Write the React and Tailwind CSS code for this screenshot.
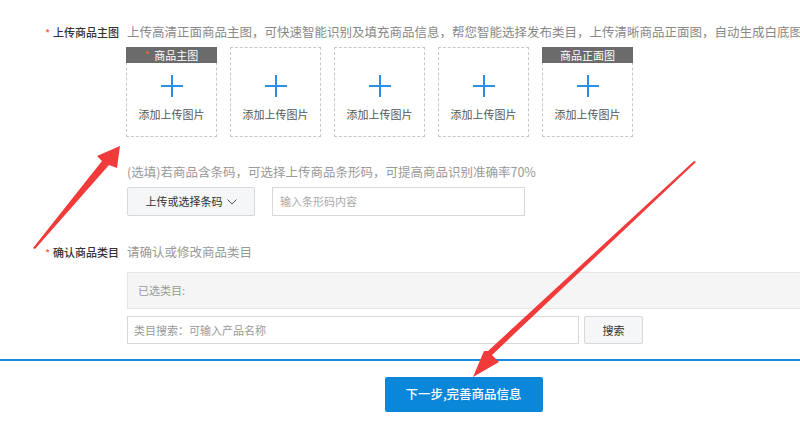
import React from "react";

const font = { fontFamily: '"Noto Sans CJK SC", "Noto Sans", sans-serif' };

function FieldLabel({ text }) {
  return (
    <div className="w-[119px] shrink-0 flex justify-end items-center h-4 text-[11px] text-[#333] font-medium">
      <span className="text-[#ff5a1f] mr-[3px] text-[10px] leading-none mt-[2px]">*</span>
      {text}
    </div>
  );
}

function PlusIcon() {
  return (
    <svg width="22" height="22" viewBox="0 0 22 22">
      <path d="M11 0v22M0 11h22" stroke="#2c8ee6" strokeWidth="2" />
    </svg>
  );
}

function UploadBox({ title, required }) {
  return (
    <div className="w-[91px] h-[90px] border border-dashed border-[#c8c8c8] flex flex-col">
      {title ? (
        <div className="h-[16px] -mx-px -mt-px bg-[#6b6b6b] text-white text-[11px] leading-[16px] flex items-center justify-center">
          {required && <span className="text-[#ff6a2a] text-[10px] mr-[5px]">*</span>}
          {title}
        </div>
      ) : (
        <div className="h-[15px]" />
      )}
      <div className="flex flex-col items-center mt-[12px]">
        <PlusIcon />
        <div className="mt-[9px] text-[11px] text-[#555] leading-4">添加上传图片</div>
      </div>
    </div>
  );
}

function Arrows() {
  return (
    <svg className="absolute inset-0 pointer-events-none" width="800" height="423" viewBox="0 0 800 423">
      <polygon
        points="33,248 102,161 97,156 120,146 117,168 109,165 35,249"
        fill="#f13a3a"
      />
      <polygon
        points="696,162 492,355 499,362 473,377 484,351 488,351 694,161"
        fill="#f13a3a"
      />
    </svg>
  );
}

export default function App() {
  return (
    <div className="relative w-[800px] h-[423px] overflow-hidden bg-white" style={font}>
      <div className="pt-[24px]">
        <div className="flex">
          <FieldLabel text="上传商品主图" />
          <div className="ml-[8px] flex-1 min-w-0">
            <div className="h-4 leading-4 text-[12.5px] text-[#888] whitespace-nowrap">
              上传高清正面商品主图，可快速智能识别及填充商品信息，帮您智能选择发布类目，上传清晰商品正面图，自动生成白底图
            </div>
            <div className="mt-[7px] -ml-px flex gap-[13px]">
              <UploadBox title="商品主图" required />
              <UploadBox />
              <UploadBox />
              <UploadBox />
              <UploadBox title="商品正面图" />
            </div>
            <div className="mt-[27px] h-4 leading-4 text-[12.5px] text-[#999] whitespace-nowrap">
              (选填)若商品含条码，可选择上传商品条形码，可提高商品识别准确率70%
            </div>
            <div className="mt-[7px] flex items-center">
              <button className="w-[128px] h-[29px] border border-[#d6d8dc] bg-[#f5f6f8] rounded-[2px] text-[11px] text-[#333] flex items-center justify-center gap-[4px]">
                上传或选择条码
                <svg width="10" height="6" viewBox="0 0 10 6">
                  <path d="M0.5 0.5L5 5L9.5 0.5" fill="none" stroke="#555" strokeWidth="1" />
                </svg>
              </button>
              <div className="ml-[17px] w-[253px] h-[29px] border border-[#d6d8dc] flex items-center pl-[7px] text-[11px] text-[#aaa]">
                输入条形码内容
              </div>
            </div>
          </div>
        </div>

        <div className="flex mt-[28px]">
          <FieldLabel text="确认商品类目" />
          <div className="ml-[8px] flex-1 min-w-0">
            <div className="h-4 leading-4 text-[12.5px] text-[#999] whitespace-nowrap">
              请确认或修改商品类目
            </div>
            <div className="mt-[12px] h-[37px] border border-[#e6e6e6] border-r-0 bg-[#f5f5f6] flex items-center pl-[10px] text-[11px] text-[#999]">
              已选类目:
            </div>
            <div className="mt-[7px] flex items-center">
              <div className="w-[452px] h-[28px] border border-[#d6d8dc] flex items-center pl-[6px] text-[11px] text-[#999]">
                类目搜索：可输入产品名称
              </div>
              <button className="ml-[5px] w-[59px] h-[28px] border border-[#d6d8dc] bg-[#f5f6f8] rounded-[2px] text-[11px] text-[#333]">
                搜索
              </button>
            </div>
          </div>
        </div>

        <div className="mt-[15px] h-[2px] bg-[#1b8de0]" />

        <div className="mt-[16px] ml-[127px] flex justify-center">
          <button className="w-[158px] h-[35px] rounded-[2px] bg-[#0a87d8] text-white text-[12.5px] font-medium">
            下一步,完善商品信息
          </button>
        </div>
      </div>
      <Arrows />
    </div>
  );
}
